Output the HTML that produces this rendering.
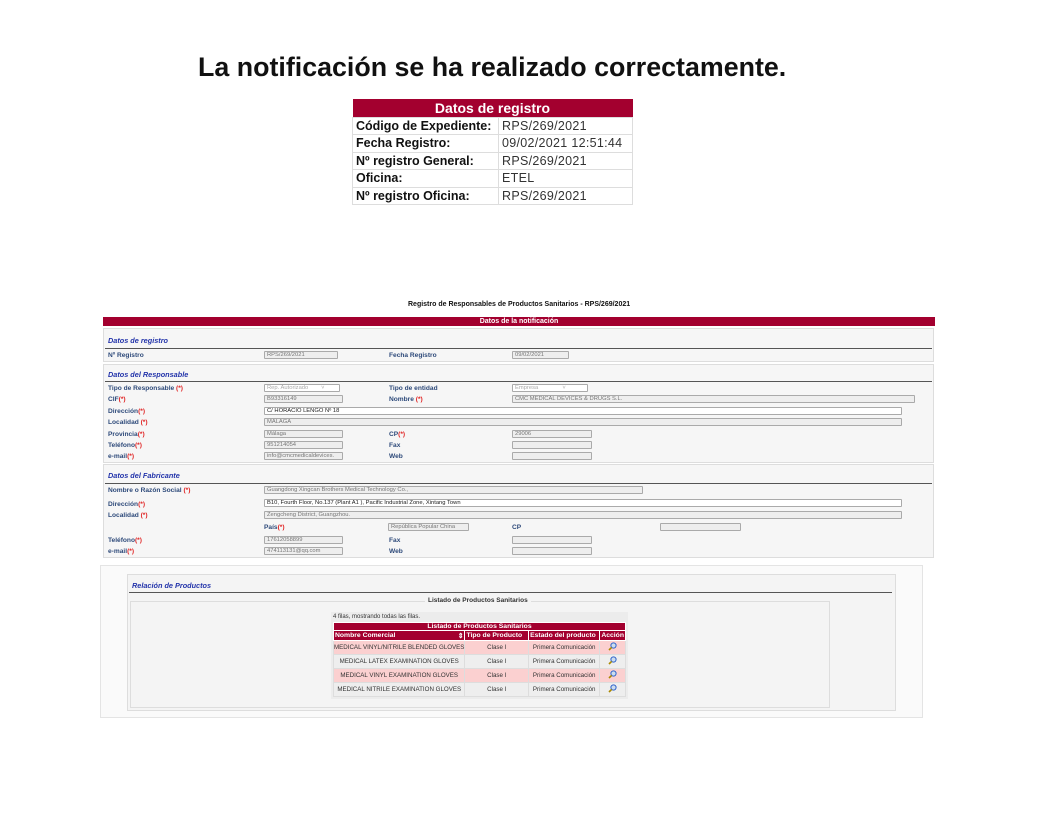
<!DOCTYPE html>
<html><head><meta charset="utf-8"><style>
*{margin:0;padding:0;box-sizing:border-box}
body{width:1064px;height:840px;background:#fff;position:relative;font-family:"Liberation Sans",Verdana,sans-serif;overflow:hidden}
.a{position:absolute}
h1{position:absolute;left:198px;top:52px;font-size:26.8px;font-weight:bold;color:#111;white-space:nowrap}
.tt{position:absolute;left:352px;top:99px;width:281px;border-collapse:collapse;font-size:12.5px}
.tt td{border:1px solid #ddd;height:17.5px;padding:0 3px;background:#fff;white-space:nowrap}
.tt th{background:#a3002f;color:#fff;height:18px;font-size:14px}
.tt td.l{font-weight:bold;width:146px;color:#111}
.tt td.v{color:#333;letter-spacing:.3px}
.s{font-size:7px;white-space:nowrap}
.lab{position:absolute;font-size:6.6px;font-weight:bold;color:#2e4a7a;white-space:nowrap}
.lab b{color:#e02020}
.h{position:absolute;font-size:7.3px;font-weight:bold;font-style:italic;color:#2233aa}
.ln{position:absolute;height:1px;background:#555}
.box{position:absolute;border:1px solid #ddd;background:#f6f6f6}
.in{position:absolute;height:8px;border:1px solid #aaa;border-radius:1px;background:#eee;font-size:5.8px;color:#777;padding-left:2px;line-height:6px;white-space:nowrap;overflow:hidden}
.in.w{background:#fff;color:#222}
.pt{position:absolute;left:333px;top:622px;width:293px;border-collapse:collapse;font-size:6.2px}
.pt th{background:#a3002f;color:#fff;height:8px;text-align:left;padding:0 1px;border:1px solid #fff;white-space:nowrap}
.pt tr.hd th{height:10px;font-size:6.8px}
.pt td{height:14px;border:1px solid #ddd;text-align:center;color:#333;white-space:nowrap}
.pt tr.p td{background:#fbd0d0}
.pt tr.g td{background:#eee}
</style></head><body>
<h1>La notificación se ha realizado correctamente.</h1>
<table class="tt">
<tr><th colspan="2">Datos de registro</th></tr>
<tr><td class="l">Código de Expediente:</td><td class="v">RPS/269/2021</td></tr>
<tr><td class="l">Fecha Registro:</td><td class="v">09/02/2021 12:51:44</td></tr>
<tr><td class="l">Nº registro General:</td><td class="v">RPS/269/2021</td></tr>
<tr><td class="l">Oficina:</td><td class="v">ETEL</td></tr>
<tr><td class="l">Nº registro Oficina:</td><td class="v">RPS/269/2021</td></tr>
</table>

<div class="a s" style="left:408px;top:301px;font-weight:bold;color:#111">Registro de Responsables de Productos Sanitarios - RPS/269/2021</div>
<div class="a" style="left:103px;top:317px;width:832px;height:9px;background:#a3002f;color:#fff;font-size:7px;font-weight:bold;text-align:center;line-height:9px">Datos de la notificación</div>

<div class="box" style="left:103px;top:328px;width:831px;height:34px"></div>
<div class="h" style="left:108px;top:336px">Datos de registro</div>
<div class="ln" style="left:105px;top:348px;width:827px"></div>
<div class="lab" style="left:108px;top:352px">Nº Registro</div>
<div class="in" style="left:264px;top:351px;width:74px">RPS/269/2021</div>
<div class="lab" style="left:389px;top:352px">Fecha Registro</div>
<div class="in" style="left:512px;top:351px;width:57px">09/02/2021</div>

<div class="box" style="left:103px;top:364px;width:831px;height:99px"></div>
<div class="h" style="left:108px;top:370px">Datos del Responsable</div>
<div class="ln" style="left:105px;top:381px;width:827px"></div>
<div class="lab" style="left:108px;top:385px">Tipo de Responsable <b>(*)</b></div>
<div class="in" style="left:264px;top:384px;width:76px;background:#fff;color:#aaa">Rep. Autorizado &nbsp;&nbsp;&nbsp;&nbsp;&nbsp;&nbsp;&nbsp;˅</div>
<div class="lab" style="left:389px;top:385px">Tipo de entidad</div>
<div class="in" style="left:512px;top:384px;width:76px;background:#fff;color:#aaa">Empresa &nbsp;&nbsp;&nbsp;&nbsp;&nbsp;&nbsp;&nbsp;&nbsp;&nbsp;&nbsp;&nbsp;&nbsp;&nbsp;&nbsp;˅</div>
<div class="lab" style="left:108px;top:396px">CIF<b>(*)</b></div>
<div class="in" style="left:264px;top:395px;width:79px">B93316149</div>
<div class="lab" style="left:389px;top:396px">Nombre <b>(*)</b></div>
<div class="in" style="left:512px;top:395px;width:403px">CMC MEDICAL DEVICES &amp; DRUGS S.L.</div>
<div class="lab" style="left:108px;top:408px">Dirección<b>(*)</b></div>
<div class="in w" style="left:264px;top:407px;width:638px">C/ HORACIO LENGO Nº 18</div>
<div class="lab" style="left:108px;top:419px">Localidad <b>(*)</b></div>
<div class="in" style="left:264px;top:418px;width:638px">MALAGA</div>
<div class="lab" style="left:108px;top:431px">Provincia<b>(*)</b></div>
<div class="in" style="left:264px;top:430px;width:79px">Málaga</div>
<div class="lab" style="left:389px;top:431px">CP<b>(*)</b></div>
<div class="in" style="left:512px;top:430px;width:80px">29006</div>
<div class="lab" style="left:108px;top:442px">Teléfono<b>(*)</b></div>
<div class="in" style="left:264px;top:441px;width:79px">951214054</div>
<div class="lab" style="left:389px;top:442px">Fax</div>
<div class="in" style="left:512px;top:441px;width:80px"></div>
<div class="lab" style="left:108px;top:453px">e-mail<b>(*)</b></div>
<div class="in" style="left:264px;top:452px;width:79px">info@cmcmedicaldevices.</div>
<div class="lab" style="left:389px;top:453px">Web</div>
<div class="in" style="left:512px;top:452px;width:80px"></div>

<div class="box" style="left:103px;top:464px;width:831px;height:94px"></div>
<div class="h" style="left:108px;top:471px">Datos del Fabricante</div>
<div class="ln" style="left:105px;top:483px;width:827px"></div>
<div class="lab" style="left:108px;top:487px">Nombre o Razón Social <b>(*)</b></div>
<div class="in" style="left:264px;top:486px;width:379px">Guangdong Xingcan Brothers Medical Technology Co.,</div>
<div class="lab" style="left:108px;top:501px">Dirección<b>(*)</b></div>
<div class="in w" style="left:264px;top:499px;width:638px">B10, Fourth Floor, No.137 (Plant A1 ), Pacific Industrial Zone, Xintang Town</div>
<div class="lab" style="left:108px;top:512px">Localidad <b>(*)</b></div>
<div class="in" style="left:264px;top:511px;width:638px">Zengcheng District, Guangzhou.</div>
<div class="lab" style="left:264px;top:524px">País<b>(*)</b></div>
<div class="in" style="left:388px;top:523px;width:81px">República Popular China</div>
<div class="lab" style="left:512px;top:524px">CP</div>
<div class="in" style="left:660px;top:523px;width:81px"></div>
<div class="lab" style="left:108px;top:537px">Teléfono<b>(*)</b></div>
<div class="in" style="left:264px;top:536px;width:79px">17612058899</div>
<div class="lab" style="left:389px;top:537px">Fax</div>
<div class="in" style="left:512px;top:536px;width:80px"></div>
<div class="lab" style="left:108px;top:548px">e-mail<b>(*)</b></div>
<div class="in" style="left:264px;top:547px;width:79px">474113131@qq.com</div>
<div class="lab" style="left:389px;top:548px">Web</div>
<div class="in" style="left:512px;top:547px;width:80px"></div>

<div class="box" style="left:100px;top:565px;width:823px;height:153px;background:#fafafa;border-color:#e4e4e4"></div>
<div class="box" style="left:127px;top:574px;width:769px;height:137px;background:#f4f4f4"></div>
<div class="h" style="left:132px;top:581px">Relación de Productos</div>
<div class="ln" style="left:129px;top:592px;width:763px"></div>
<div class="a" style="left:130px;top:601px;width:700px;height:107px;border:1px solid #ddd"></div>
<div class="a s" style="left:425px;top:597px;background:#f4f4f4;padding:0 3px;font-weight:bold;color:#333;font-size:6.5px">Listado de Productos Sanitarios</div>
<div class="a" style="left:331px;top:612px;width:297px;height:87px;background:#ececec"></div>
<div class="a s" style="left:333px;top:614px;font-size:6px;color:#333">4 filas, mostrando todas las filas.</div>
<table class="pt">
<tr><th colspan="5" style="text-align:center;font-size:6.8px">Listado de Productos Sanitarios</th></tr>
<tr class="hd"><th style="width:127px">Nombre Comercial<span style="float:right">⇕</span></th><th style="width:67px">Tipo de Producto</th><th style="width:73px">Estado del producto</th><th>Acción</th></tr>
<tr class="p"><td>MEDICAL VINYL/NITRILE BLENDED GLOVES</td><td>Clase I</td><td>Primera Comunicación</td><td><svg width="9" height="9" viewBox="0 0 9 9"><circle cx="5.5" cy="3.5" r="2.6" fill="#cde" stroke="#36c" stroke-width="1"/><path d="M3.6 5.4L1 8" stroke="#a80" stroke-width="1.6"/></svg></td></tr>
<tr class="g"><td>MEDICAL LATEX EXAMINATION GLOVES</td><td>Clase I</td><td>Primera Comunicación</td><td><svg width="9" height="9" viewBox="0 0 9 9"><circle cx="5.5" cy="3.5" r="2.6" fill="#cde" stroke="#36c" stroke-width="1"/><path d="M3.6 5.4L1 8" stroke="#a80" stroke-width="1.6"/></svg></td></tr>
<tr class="p"><td>MEDICAL VINYL EXAMINATION GLOVES</td><td>Clase I</td><td>Primera Comunicación</td><td><svg width="9" height="9" viewBox="0 0 9 9"><circle cx="5.5" cy="3.5" r="2.6" fill="#cde" stroke="#36c" stroke-width="1"/><path d="M3.6 5.4L1 8" stroke="#a80" stroke-width="1.6"/></svg></td></tr>
<tr class="g"><td>MEDICAL NITRILE EXAMINATION GLOVES</td><td>Clase I</td><td>Primera Comunicación</td><td><svg width="9" height="9" viewBox="0 0 9 9"><circle cx="5.5" cy="3.5" r="2.6" fill="#cde" stroke="#36c" stroke-width="1"/><path d="M3.6 5.4L1 8" stroke="#a80" stroke-width="1.6"/></svg></td></tr>
</table>
</body></html>
